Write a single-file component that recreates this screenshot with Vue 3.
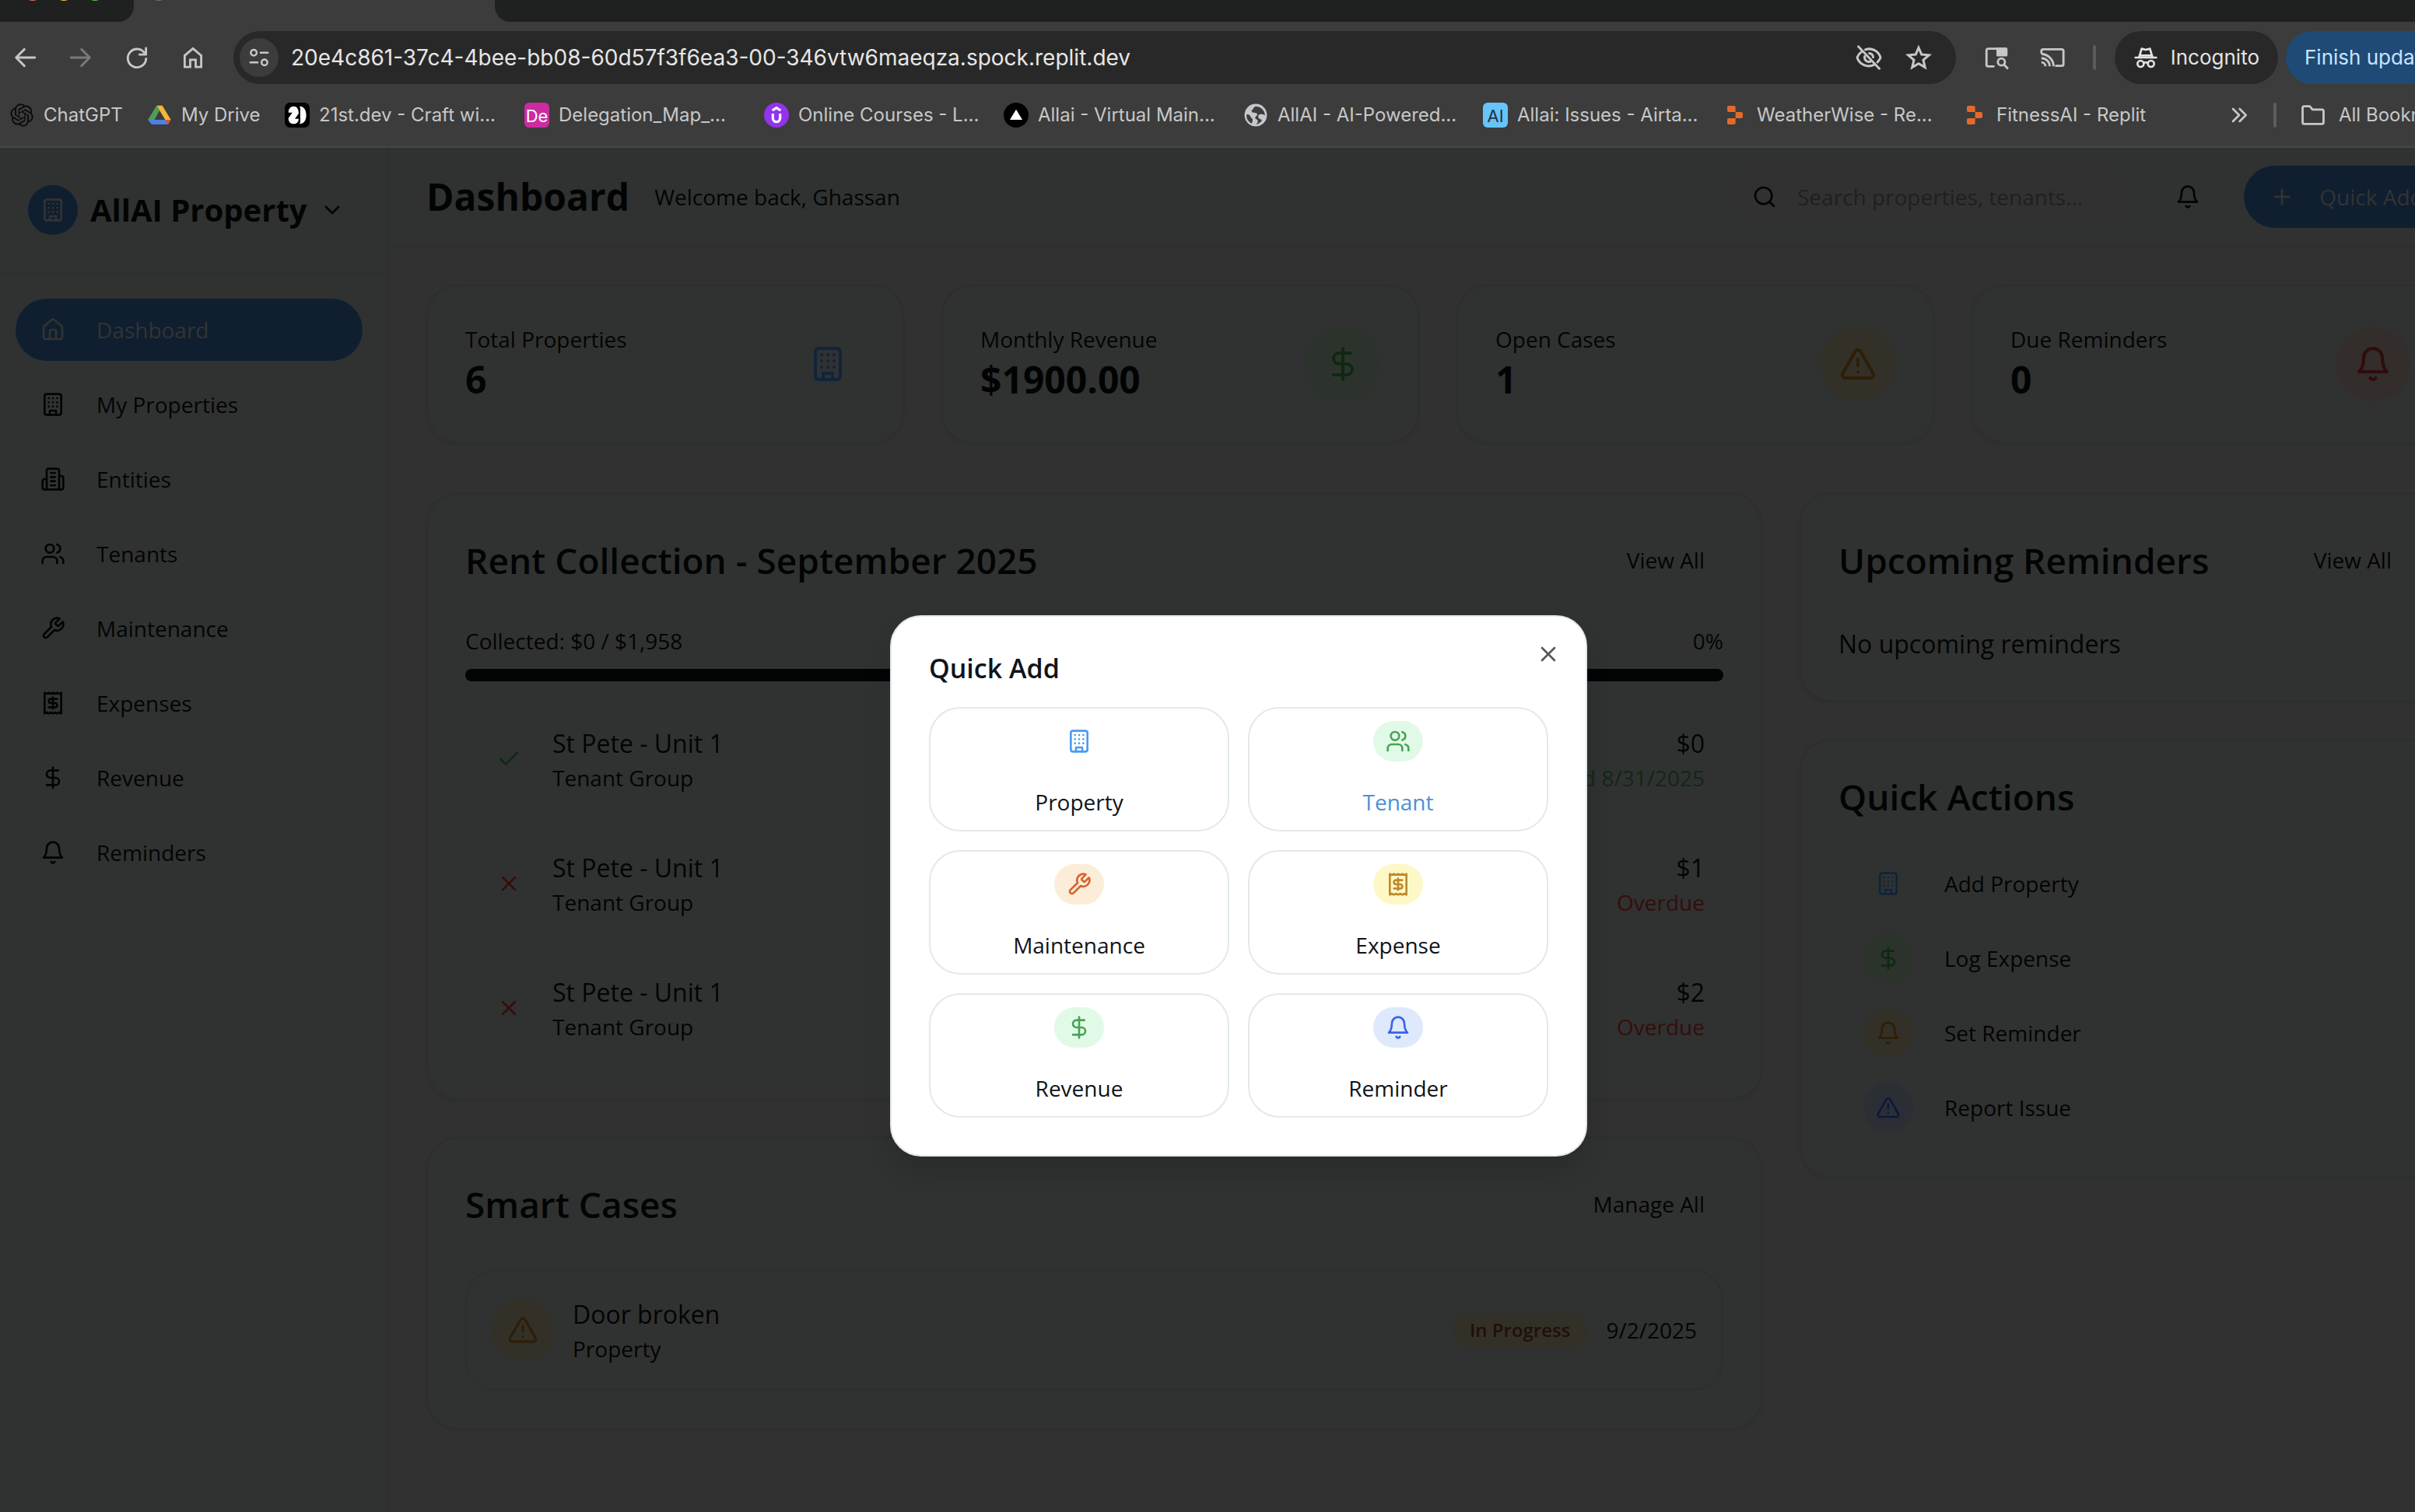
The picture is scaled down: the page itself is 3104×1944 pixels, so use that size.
<script setup>
import { h } from 'vue'

const icons = {
  home: '<path d="M15 21v-8a1 1 0 0 0-1-1h-4a1 1 0 0 0-1 1v8"/><path d="M3 10a2 2 0 0 1 .709-1.528l7-5.999a2 2 0 0 1 2.582 0l7 5.999A2 2 0 0 1 21 10v9a2 2 0 0 1-2 2H5a2 2 0 0 1-2-2z"/>',
  building: '<rect width="16" height="20" x="4" y="2" rx="2"/><path d="M9 22v-4h6v4M8 6h.01M16 6h.01M12 6h.01M12 10h.01M12 14h.01M16 10h.01M16 14h.01M8 10h.01M8 14h.01"/>',
  entities: '<path d="M6 22V4a2 2 0 0 1 2-2h8a2 2 0 0 1 2 2v18Z"/><path d="M6 12H4a2 2 0 0 0-2 2v6a2 2 0 0 0 2 2h2M18 9h2a2 2 0 0 1 2 2v9a2 2 0 0 1-2 2h-2M10 6h4M10 10h4M10 14h4M10 18h4"/>',
  users: '<path d="M16 21v-2a4 4 0 0 0-4-4H6a4 4 0 0 0-4 4v2"/><circle cx="9" cy="7" r="4"/><path d="M22 21v-2a4 4 0 0 0-3-3.87M16 3.13a4 4 0 0 1 0 7.75"/>',
  wrench: '<path d="M14.7 6.3a1 1 0 0 0 0 1.4l1.6 1.6a1 1 0 0 0 1.4 0l3.77-3.77a6 6 0 0 1-7.94 7.94l-6.91 6.91a2.12 2.12 0 0 1-3-3l6.91-6.91a6 6 0 0 1 7.94-7.94l-3.76 3.76z"/>',
  receipt: '<path d="M4 2v20l2-1 2 1 2-1 2 1 2-1 2 1 2-1 2 1V2l-2 1-2-1-2 1-2-1-2 1-2-1-2 1Z"/><path d="M16 8h-6a2 2 0 1 0 0 4h4a2 2 0 1 1 0 4H8M12 17.5v-11"/>',
  dollar: '<path d="M12 2v20M17 5H9.5a3.5 3.5 0 0 0 0 7h5a3.5 3.5 0 0 1 0 7H6"/>',
  bell: '<path d="M6 8a6 6 0 0 1 12 0c0 7 3 9 3 9H3s3-2 3-9"/><path d="M10.3 21a1.94 1.94 0 0 0 3.4 0"/>',
  alert: '<path d="m21.73 18-8-14a2 2 0 0 0-3.48 0l-8 14A2 2 0 0 0 4 21h16a2 2 0 0 0 1.73-3"/><path d="M12 9v4M12 17h.01"/>',
  check: '<path d="M20 6 9 17l-5-5"/>',
  close: '<path d="M18 6 6 18M6 6l12 12"/>',
  plus: '<path d="M5 12h14M12 5v14"/>',
  chevron: '<path d="m6 9 6 6 6-6"/>',
  search: '<circle cx="11" cy="11" r="8"/><path d="m21 21-4.3-4.3"/>',
  back: '<path d="M21 12H4M11.500 4.500 4 12l7.500 7.500"/>',
  forward: '<path d="M3 12h17M12.500 4.500 20 12l-7.500 7.500"/>',
  reload: '<path d="M19.500 9A8.300 8.300 0 1 0 20.300 13M20.200 3.500V9.300H14.400"/>',
  house: '<path d="M4.500 10.200 12 3.800l7.500 6.400V20.500H14.500V14H9.500v6.500H4.500z" stroke-linejoin="miter"/>',
  tune: '<circle cx="6.500" cy="7" r="3"/><path d="M13.500 7H21M3 17h7.500"/><circle cx="17.500" cy="17" r="3"/>',
  eyeoff: '<path d="M3 2.500 21 21.500"/><path d="M9 5.200A10 10 0 0 1 22 12a11 11 0 0 1-2.600 3.900M16.500 18.200A10.500 10.500 0 0 1 2 12a11 11 0 0 1 3.700-4.900"/><path d="M12.500 8.300a3.700 3.700 0 0 1 3.200 3.400M13.200 15.500A3.700 3.700 0 0 1 8.500 11"/>',
  star: '<path d="M12 3.500l2.500 5.900 6.400.5-4.900 4.200 1.500 6.300L12 17.100l-5.500 3.300L8 14.100 3.100 9.900l6.400-.5z" stroke-linejoin="miter"/>',
  page: '<path d="M9.500 20H4.500A1.500 1.500 0 0 1 3 18.500v-13A1.500 1.500 0 0 1 4.500 4h15A1.500 1.500 0 0 1 21 5.500V9"/><path d="M13 4h8v6h-8z" fill="currentColor"/><circle cx="16.500" cy="16" r="3.200"/><path d="m19 18.500 3 3.200"/>',
  cast: '<path d="M2 8.500V6a1.500 1.500 0 0 1 1.500-1.500h17A1.500 1.500 0 0 1 22 6v12a1.500 1.500 0 0 1-1.500 1.500H14.500M2 12.500a7.500 7.500 0 0 1 7.500 7.500M2 16.300A3.700 3.700 0 0 1 5.700 20M2 8.800A11.200 11.200 0 0 1 13 20" stroke-linecap="butt"/>',
  incognito: '<path d="M2 12h20"/><path d="M5.500 12 8 3.500l4 1 4-1L18.500 12M6 10h12" /><circle cx="7" cy="18" r="3"/><circle cx="17" cy="18" r="3"/><path d="M10 17.500a3 3 0 0 1 4 0"/>',
  more: '<path d="m6 6 6 6-6 6M12.500 6l6 6-6 6"/>',
  folder: '<path d="M2.500 5.500A1.500 1.500 0 0 1 4 4h5l2.500 3H20a1.500 1.500 0 0 1 1.500 1.500v10A1.500 1.500 0 0 1 20 20H4a1.500 1.500 0 0 1-1.500-1.500z"/>'
}

const logos = {
  chatgpt: '<path fill="#0b0b0b" d="M22.2819 9.8211a5.9847 5.9847 0 0 0-.5157-4.9108 6.0462 6.0462 0 0 0-6.5098-2.9A6.0651 6.0651 0 0 0 4.9807 4.1818a5.9847 5.9847 0 0 0-3.9977 2.9 6.0462 6.0462 0 0 0 .7427 7.0966 5.98 5.98 0 0 0 .511 4.9107 6.051 6.051 0 0 0 6.5146 2.9001A5.9847 5.9847 0 0 0 13.2599 24a6.0557 6.0557 0 0 0 5.7718-4.2058 5.9894 5.9894 0 0 0 3.9977-2.9001 6.0557 6.0557 0 0 0-.7475-7.0729zm-9.022 12.6081a4.4755 4.4755 0 0 1-2.8764-1.0408l.1419-.0804 4.7783-2.7582a.7948.7948 0 0 0 .3927-.6813v-6.7369l2.02 1.1686a.071.071 0 0 1 .038.052v5.5826a4.504 4.504 0 0 1-4.4945 4.4944zm-9.6607-4.1254a4.4708 4.4708 0 0 1-.5346-3.0137l.142.0852 4.783 2.7582a.7712.7712 0 0 0 .7806 0l5.8428-3.3685v2.3324a.0804.0804 0 0 1-.0332.0615L9.74 19.9502a4.4992 4.4992 0 0 1-6.1408-1.6464zM2.3408 7.8956a4.485 4.485 0 0 1 2.3655-1.9728V11.6a.7664.7664 0 0 0 .3879.6765l5.8144 3.3543-2.0201 1.1685a.0757.0757 0 0 1-.071 0l-4.8303-2.7865A4.504 4.504 0 0 1 2.3408 7.872zm16.5963 3.8558L13.1038 8.364 15.1192 7.2a.0757.0757 0 0 1 .071 0l4.8303 2.7913a4.4944 4.4944 0 0 1-.6765 8.1042v-5.6772a.79.79 0 0 0-.407-.667zm2.0107-3.0231l-.142-.0852-4.7735-2.7818a.7759.7759 0 0 0-.7854 0L9.409 9.2297V6.8974a.0662.0662 0 0 1 .0284-.0615l4.8303-2.7866a4.4992 4.4992 0 0 1 6.6802 4.66zM8.3065 12.863l-2.02-1.1638a.0804.0804 0 0 1-.038-.0567V6.0742a4.4992 4.4992 0 0 1 7.3757-3.4537l-.142.0805L8.704 5.459a.7948.7948 0 0 0-.3927.6813zm1.0976-2.3654l2.602-1.4998 2.6069 1.4998v2.9994l-2.5974 1.4997-2.6067-1.4997Z" transform="translate(1 1) scale(.92)"/>',
  drive: '<path fill="#4f9d57" d="M9.300 2.800 12 7.300 5 21 1 16.500z"/><path fill="#f2b63c" d="M9.300 2.800h5.400L23 16.500h-5.500z"/><path fill="#4f7fe8" d="M1 16.500h17L20.500 21H4.500z"/><path fill="#e0503c" d="M17.500 16.500H23L20.300 21z"/><path fill="#4f9d57" d="M9.300 2.800 1 16.500h5.500L12 7.300z"/>',
  dev21: '<rect width="24" height="24" rx="5" fill="#000"/><path fill="#fff" d="M8.500 3.500C5.500 3.500 3.500 6 3.500 9.500h3.800L3.500 15c0 3.500 2 5.500 5 5.500 3.200 0 4.900-2 4.900-5H9.800l3.600-5C13.400 6 11.700 3.500 8.500 3.500z"/><path fill="#fff" d="M14.200 3.500c4.200 0 6.500 3.500 6.500 8.500s-2.300 8.500-6.500 8.500c1.300-2 .7-4.500.7-8.500s.6-6.500-.7-8.500z"/>',
  udemy: '<circle cx="12" cy="12" r="12" fill="#9333ea"/><path d="M8 7.500 12 5l4 2.500M8.500 10.500v4.500a3.500 3.500 0 0 0 7 0v-4.500" fill="none" stroke="#fff" stroke-width="2.400"/>',
  allai: '<circle cx="12" cy="12" r="12" fill="#000"/><path d="M12 6.500 18 16.500H6z" fill="#fff"/>',
  globe: '<circle cx="12" cy="12" r="10.800" fill="#c4c7cc"/><path fill="#3c3c3c" d="M12.500 3.500c-3 .5-2 2-3.500 3S8 9 9.500 9.500s4 0 4 1.800-2 1.700-2 3.400 2.500 1 2.500 3-1 3-2 3.300a9 9 0 0 0 6-4c-1-1.500-3-1-3.500-3s1-3 3-3 3.200 1 3.400 1A9 9 0 0 0 12.500 3.500zM3.200 11.200c1.800-.2 3.300.8 3.800 2.300s2 1.500 2 3-.5 3-1 3.500A9 9 0 0 1 3.200 11.200z"/>',
  replit: '<path fill="#e46a2a" d="M4.500 4.500A1.500 1.500 0 0 1 6 3h5a1.500 1.500 0 0 1 1.500 1.500V9H6a1.500 1.500 0 0 1-1.500-1.500zM12.500 9H18a1.500 1.500 0 0 1 1.500 1.500v3A1.500 1.500 0 0 1 18 15h-5.500zM4.500 16.500A1.500 1.500 0 0 1 6 15h6.500v4.500A1.500 1.500 0 0 1 11 21H6a1.500 1.500 0 0 1-1.500-1.500z"/>'
}

const Icon = (props) =>
  h('svg', {
    class: 'icon', viewBox: '0 0 24 24', fill: 'none', stroke: 'currentColor',
    'stroke-width': 2, 'stroke-linecap': 'round', 'stroke-linejoin': 'round',
    'aria-hidden': 'true', innerHTML: icons[props.name]
  })
Icon.props = ['name']

const Logo = (props) =>
  h('svg', { class: 'icon', viewBox: '0 0 24 24', 'aria-hidden': 'true', innerHTML: logos[props.name] })
Logo.props = ['name']

const bookmarks = [
  { text: 'ChatGPT', logo: 'chatgpt', short: true },
  { text: 'My Drive', logo: 'drive', short: true },
  { text: '21st.dev - Craft wi...', logo: 'dev21' },
  { text: 'Delegation_Map_...', tile: 'De', tone: 'pink' },
  { text: 'Online Courses - L...', logo: 'udemy' },
  { text: 'Allai - Virtual Main...', logo: 'allai' },
  { text: 'AllAI - AI-Powered...', logo: 'globe' },
  { text: 'Allai: Issues - Airta...', tile: 'AI', tone: 'sky' },
  { text: 'WeatherWise - Re...', logo: 'replit' },
  { text: 'FitnessAI - Replit', logo: 'replit' }
]
const nav = [
  { text: 'Dashboard', icon: 'home', active: true },
  { text: 'My Properties', icon: 'building' },
  { text: 'Entities', icon: 'entities' },
  { text: 'Tenants', icon: 'users' },
  { text: 'Maintenance', icon: 'wrench' },
  { text: 'Expenses', icon: 'receipt' },
  { text: 'Revenue', icon: 'dollar' },
  { text: 'Reminders', icon: 'bell' }
]
const stats = [
  { label: 'Total Properties', value: '6', icon: 'building', tone: 'blue' },
  { label: 'Monthly Revenue', value: '$1900.00', icon: 'dollar', tone: 'green' },
  { label: 'Open Cases', value: '1', icon: 'alert', tone: 'amber' },
  { label: 'Due Reminders', value: '0', icon: 'bell', tone: 'red' }
]
const rents = [
  { amount: '$0', note: 'Paid 8/31/2025', paid: true },
  { amount: '$1', note: 'Overdue', paid: false },
  { amount: '$2', note: 'Overdue', paid: false }
]
const actions = [
  { text: 'Add Property', icon: 'building', tone: 'blue' },
  { text: 'Log Expense', icon: 'dollar', tone: 'green' },
  { text: 'Set Reminder', icon: 'bell', tone: 'amber' },
  { text: 'Report Issue', icon: 'alert', tone: 'indigo' }
]
const quick = [
  { text: 'Property', icon: 'building', tone: 'q-blue' },
  { text: 'Tenant', icon: 'users', tone: 'q-green', active: true },
  { text: 'Maintenance', icon: 'wrench', tone: 'q-orange' },
  { text: 'Expense', icon: 'receipt', tone: 'q-yellow' },
  { text: 'Revenue', icon: 'dollar', tone: 'q-green' },
  { text: 'Reminder', icon: 'bell', tone: 'q-indigo' }
]
</script>

<template>
  <div class="viewport">
    <div class="window">
      <div class="chrome">
        <div class="tabs">
          <div class="tabs-left"><i class="dot r"></i><i class="dot y"></i><i class="dot g"></i></div>
          <div class="tab"><i class="favicon"></i></div>
          <div class="tabs-right"></div>
        </div>
        <div class="toolbar">
          <button class="tool" aria-label="Back"><Icon name="back" /></button>
          <button class="tool off" aria-label="Forward"><Icon name="forward" /></button>
          <button class="tool" aria-label="Reload"><Icon name="reload" /></button>
          <button class="tool" aria-label="Home"><Icon name="house" /></button>
          <div class="address">
            <button class="site" aria-label="Site information"><Icon name="tune" /></button>
            <input class="url" aria-label="Address" value="20e4c861-37c4-4bee-bb08-60d57f3f6ea3-00-346vtw6maeqza.spock.replit.dev" />
            <button class="tool" aria-label="Third-party cookies blocked"><Icon name="eyeoff" /></button>
            <button class="tool" aria-label="Bookmark this tab"><Icon name="star" /></button>
          </div>
          <button class="tool" aria-label="Search side panel"><Icon name="page" /></button>
          <button class="tool" aria-label="Cast"><Icon name="cast" /></button>
          <span class="divider"></span>
          <button class="pill"><Icon name="incognito" />Incognito</button>
          <button class="pill update">Finish update</button>
        </div>
        <nav class="bookmarks" aria-label="Bookmarks">
          <a v-for="b in bookmarks" :key="b.text" href="#" class="bookmark" :class="{ short: b.short }">
            <span v-if="b.tile" class="tile" :class="b.tone">{{ b.tile }}</span>
            <Logo v-else :name="b.logo" />
            {{ b.text }}
          </a>
          <button class="more" aria-label="More bookmarks"><Icon name="more" /></button>
          <span class="divider"></span>
          <button class="folder"><Icon name="folder" />All Bookmarks</button>
        </nav>
      </div>

      <div class="app">
        <aside class="sidebar">
          <div class="brand">
            <span class="brand-logo"><Icon name="building" /></span>
            <button class="brand-name">AllAI Property<Icon name="chevron" /></button>
          </div>
          <nav class="menu">
            <a v-for="n in nav" :key="n.text" href="#" class="menu-item" :class="{ active: n.active }">
              <Icon :name="n.icon" />{{ n.text }}
            </a>
          </nav>
        </aside>

        <div class="main">
          <header class="header">
            <h1>Dashboard</h1>
            <p>Welcome back, Ghassan</p>
            <label class="search">
              <Icon name="search" />
              <input type="text" placeholder="Search properties, tenants..." aria-label="Search properties and tenants" />
            </label>
            <button class="bell" aria-label="Notifications"><Icon name="bell" /></button>
            <button class="add"><Icon name="plus" />Quick Add</button>
          </header>

          <main class="content">
            <section class="stats">
              <article v-for="s in stats" :key="s.label" class="card stat">
                <div>
                  <p class="label">{{ s.label }}</p>
                  <p class="value">{{ s.value }}</p>
                </div>
                <span class="badge-icon large" :class="s.tone"><Icon :name="s.icon" /></span>
              </article>
            </section>

            <div class="columns">
              <div class="stack">
                <section class="card">
                  <div class="card-head">
                    <h2>Rent Collection - September 2025</h2>
                    <button class="link">View All</button>
                  </div>
                  <div class="progress-label"><span>Collected: $0 / $1,958</span><b>0%</b></div>
                  <div class="progress" role="progressbar" aria-label="Rent collected" aria-valuenow="0"></div>
                  <ul class="rents">
                    <li v-for="r in rents" :key="r.amount">
                      <span class="badge-icon" :class="r.paid ? 'paid' : 'overdue'"><Icon :name="r.paid ? 'check' : 'close'" /></span>
                      <div class="grow">
                        <p class="item-title">St Pete - Unit 1</p>
                        <p class="item-sub">Tenant Group</p>
                      </div>
                      <div class="right">
                        <p class="item-title">{{ r.amount }}</p>
                        <p class="item-sub" :class="r.paid ? 'paid' : 'overdue'">{{ r.note }}</p>
                      </div>
                    </li>
                  </ul>
                </section>

                <section class="card">
                  <div class="card-head">
                    <h2>Smart Cases</h2>
                    <button class="link">Manage All</button>
                  </div>
                  <div class="case">
                    <span class="badge-icon medium amber"><Icon name="alert" /></span>
                    <div class="grow">
                      <p class="item-title">Door broken</p>
                      <p class="item-sub">Property</p>
                    </div>
                    <span class="status">In Progress</span>
                    <time class="item-sub">9/2/2025</time>
                  </div>
                </section>
              </div>

              <div class="stack">
                <section class="card">
                  <div class="card-head">
                    <h2>Upcoming Reminders</h2>
                    <button class="link">View All</button>
                  </div>
                  <p class="empty">No upcoming reminders</p>
                </section>
                <section class="card">
                  <h2 class="solo">Quick Actions</h2>
                  <div class="actions">
                    <button v-for="a in actions" :key="a.text" class="action">
                      <span class="badge-icon" :class="a.tone"><Icon :name="a.icon" /></span>{{ a.text }}
                    </button>
                  </div>
                </section>
              </div>
            </div>
          </main>
        </div>
      </div>

      <div class="overlay">
        <div class="dialog" role="dialog" aria-label="Quick Add">
          <h2>Quick Add</h2>
          <button class="close" aria-label="Close"><Icon name="close" /></button>
          <div class="choices">
            <button v-for="q in quick" :key="q.text" class="choice" :class="{ active: q.active }">
              <span class="chip" :class="q.tone"><Icon :name="q.icon" /></span>{{ q.text }}
            </button>
          </div>
        </div>
      </div>
    </div>
  </div>
</template>

<style>
body { background: #323131; }
</style>

<style scoped>
* { box-sizing: border-box; margin: 0; padding: 0; }
button, input { font: inherit; color: inherit; background: none; border: 0; outline: 0; }
button { display: flex; align-items: center; justify-content: center; white-space: nowrap; }
a { color: inherit; text-decoration: none; }
.icon { width: 32px; height: 32px; flex: none; display: block; }
.viewport { min-height: 100vh; overflow: hidden; }
/* The window runs past the right edge of the visible area. */
.window {
  position: relative; width: calc(100% + 80px); min-height: 100vh; display: flex; flex-direction: column;
  font: 400 28px/40px "Open Sans", sans-serif; color: #020404;
}

/* Browser chrome */
.chrome { background: #3c3c3c; color: #c7c7c7; border-bottom: 2px solid #474747; font-family: Inter, sans-serif; }
.tabs { display: flex; height: 28px; overflow: hidden; }
.tabs-left { width: 172px; padding-left: 30px; display: flex; gap: 16px; background: #1f2120; border-radius: 0 0 20px 0; }
.tab { width: 464px; padding-left: 20px; }
.tabs-right { flex: 1; background: #1f2120; border-radius: 0 0 0 20px; }
.dot, .favicon { width: 24px; height: 24px; margin-top: -23px; border-radius: 50%; display: block; }
.r { background: #ed6a5e; }
.y { background: #f4bf4f; }
.g { background: #61c554; }
.favicon { background: #6b6f76; }
.toolbar { display: flex; align-items: center; gap: 32px; padding: 12px; }
.tool { width: 40px; height: 40px; }
.off { color: #7a7a7a; }
.address {
  flex: 1; display: flex; align-items: center; gap: 24px; height: 68px; padding: 0 28px 0 8px;
  border-radius: 34px; background: #282828;
}
.address .icon { width: 36px; height: 36px; }
.address .site { width: 50px; height: 50px; margin-right: -8px; border-radius: 50%; background: #3c3c3c; }
.address .site .icon { width: 30px; height: 30px; }
.toolbar > .tool .icon { width: 34px; height: 34px; }
.url { flex: 1; font-size: 28px; color: #e6e6e6; }
.divider { width: 4px; height: 32px; border-radius: 2px; background: #5c5c5c; }
.toolbar > .divider { margin-right: -8px; }
.pill { height: 68px; padding: 0 24px; gap: 16px; border-radius: 34px; background: #282828; color: #e3e3e3; font-size: 26px; }
.update { width: 234px; margin-left: -22px; justify-content: flex-start; background: #1f4a75; color: #c8e4ff; }
.bookmarks { display: flex; align-items: center; height: 56px; margin-bottom: 12px; padding: 0 12px; font-size: 24px; }
.bookmark { display: flex; align-items: center; gap: 12px; width: 308px; white-space: nowrap; }
.bookmark.short { width: 177px; }
.tile { width: 32px; height: 32px; border-radius: 6px; font-size: 22px; line-height: 34px; text-align: center; }
.pink { background: #cc2ba1; color: #fff; }
.sky { background: #66c4fb; color: #23323c; }
.more { width: 40px; margin-left: 28px; margin-right: 24px; }
.folder { flex: 1; justify-content: flex-start; gap: 16px; margin-left: 30px; }
.folder .icon { width: 34px; height: 34px; }

/* App shell */
.app { flex: 1; display: flex; background: #323131; }
.sidebar { width: 500px; flex: none; background: #303231; border-right: 2px solid #2c2f2f; }
.brand { display: flex; align-items: center; gap: 16px; padding: 48px 36px; border-bottom: 2px solid #2c2f2f; }
.brand-logo { display: flex; align-items: center; justify-content: center; width: 64px; height: 64px; border-radius: 50%; background: #0f1f30; color: #333; }
.brand-name { gap: 16px; font-size: 40px; font-weight: 700; }
.menu { display: flex; flex-direction: column; gap: 16px; padding: 32px 32px 32px 20px; }
.menu-item { display: flex; align-items: center; gap: 40px; height: 80px; padding: 0 32px; border-radius: 40px; font-weight: 500; }
.menu-item.active { background: #0f1f30; color: #333; }
.main { flex: 1; min-width: 0; }
.header { display: flex; align-items: center; gap: 32px; height: 128px; padding: 0 36px 0 48px; background: #303231; border-bottom: 2px solid #2c2f2f; }
.header h1 { font-size: 48px; line-height: 64px; font-weight: 700; }
.search { display: flex; align-items: center; gap: 26px; width: 512px; height: 80px; margin-left: auto; padding: 0 24px; border-radius: 40px; background: #323131; }
.search input { flex: 1; min-width: 0; }
.search input::placeholder { color: #1f2020; opacity: 1; }
.bell { width: 80px; height: 80px; }
.add { width: 264px; height: 80px; gap: 32px; border-radius: 40px; background: #0f1f30; color: #333; font-weight: 500; }

/* Cards */
.content { padding: 48px 36px 48px 48px; }
.card { padding: 48px; border: 2px solid #2c2f2f; border-radius: 40px; background: #303231; box-shadow: 0 2px 4px rgba(0, 0, 0, .06); }
.stats { display: grid; grid-template-columns: repeat(4, 1fr); gap: 48px; margin-bottom: 64px; }
.stat { display: flex; align-items: center; justify-content: space-between; }
.label { font-weight: 500; }
.value { font-size: 48px; line-height: 64px; font-weight: 700; }
.columns { display: grid; grid-template-columns: 1717fr 835fr; align-items: start; gap: 48px; }
.stack { display: flex; flex-direction: column; gap: 48px; }
.card h2 { font-size: 46px; line-height: 48px; font-weight: 600; }
.card-head { display: flex; align-items: center; justify-content: space-between; height: 72px; margin-bottom: 48px; }
.solo { margin-bottom: 48px; }
.link { height: 72px; padding: 0 24px; font-weight: 500; }
.badge-icon { display: flex; align-items: center; justify-content: center; flex: none; width: 64px; height: 64px; border-radius: 50%; }
.medium { width: 80px; height: 80px; }
.medium .icon { width: 40px; height: 40px; }
.large { width: 96px; height: 96px; }
.large .icon { width: 48px; height: 48px; }
.blue { color: #10243b; }
.green { color: #0f2812; background: #2c332d; }
.amber { color: #2e1e08; background: #333127; }
.red { color: #2f0c0b; background: #332d2c; }
.indigo { color: #0e1838; background: #2b2f35; }
.paid { color: #112814; }
.overdue { color: #340e0c; }
.progress-label { display: flex; justify-content: space-between; margin-bottom: 16px; }
.progress-label b { font-weight: 500; }
.progress { height: 16px; border-radius: 8px; background: #030405; }
.rents { display: flex; flex-direction: column; gap: 24px; margin-top: 32px; list-style: none; }
.rents li { display: flex; align-items: center; gap: 24px; padding: 24px; }
.grow { flex: 1; }
.right { text-align: right; }
.item-title { font-size: 32px; line-height: 48px; font-weight: 500; }
.item-sub { font-size: 28px; line-height: 40px; }
.case { display: flex; align-items: center; gap: 24px; padding: 32px; border: 2px solid #2c2f2f; border-radius: 40px; }
.status { padding: 4px 20px; border: 2px solid #333127; border-radius: 22px; background: #333127; color: #1f1007; font-size: 24px; line-height: 32px; font-weight: 600; }
.empty { font-size: 32px; line-height: 48px; }
.actions { display: flex; flex-direction: column; gap: 16px; }
.action { height: 80px; padding: 0 32px; gap: 40px; justify-content: flex-start; font-weight: 500; }

/* Quick Add dialog */
.overlay { position: absolute; inset: 791px 0 auto 0; display: flex; justify-content: center; }
.dialog { position: relative; width: 896px; padding: 48px; border: 2px solid #e1e9ee; border-radius: 40px; background: #fff; color: #0f1419; box-shadow: 0 20px 30px rgba(0, 0, 0, .12); }
.dialog h2 { margin-bottom: 32px; font-size: 34px; line-height: 36px; font-weight: 600; }
.close { position: absolute; top: 32px; right: 32px; color: #54585b; }
.choices { display: grid; grid-template-columns: 1fr 1fr; gap: 24px; }
.choice { height: 160px; flex-direction: column; gap: 32px; border: 2px solid #e1e9ee; border-radius: 40px; font-weight: 500; }
.choice.active { color: #4a90d9; }
.chip { display: flex; align-items: center; justify-content: center; width: 64px; height: 52px; border-radius: 26px; }
.q-blue { color: #4b9bf0; }
.q-green { color: #4aa355; background: #e0fae7; }
.q-orange { color: #dc622c; background: #fcedd8; }
.q-yellow { color: #bf8a2c; background: #fdf8c6; }
.q-indigo { color: #3a63ea; background: #dee9fc; }
</style>
